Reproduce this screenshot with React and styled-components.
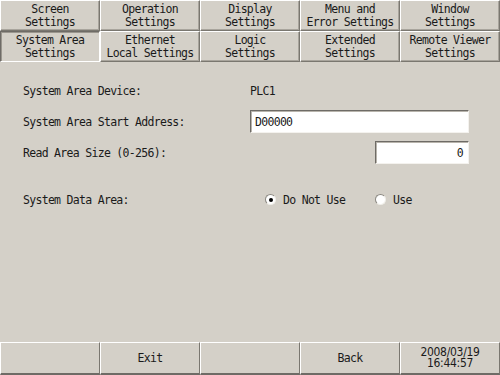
import React from "react";
import styled, { createGlobalStyle } from "styled-components";

const GlobalStyle = createGlobalStyle`
  html, body {
    margin: 0;
    padding: 0;
    background: #d4d0c8;
  }
  body {
    font-family: "DejaVu Sans Mono", "Liberation Mono", monospace;
    font-size: 11.5px;
    letter-spacing: -0.7px;
    color: #1a1a1a;
  }
`;

const Screen = styled.div`
  width: 500px;
  height: 375px;
  background: #d4d0c8;
  display: flex;
  flex-direction: column;
  overflow: hidden;
`;

const TabGrid = styled.div`
  display: grid;
  grid-template-columns: repeat(5, 100px);
  grid-auto-rows: 31px;
`;

const Tab = styled.div`
  box-sizing: border-box;
  display: flex;
  align-items: center;
  justify-content: center;
  text-align: center;
  line-height: 13px;
  white-space: pre;
  background: #d4d0c8;
  border-top: 1px solid ${(p) => (p.$active ? "#6e6b66" : "#ffffff")};
  border-left: 1px solid ${(p) => (p.$active ? "#6e6b66" : "#ffffff")};
  border-bottom: 1px solid ${(p) => (p.$active ? "#ffffff" : "#7a7770")};
  border-right: 1px solid ${(p) => (p.$active ? "#ffffff" : "#7a7770")};
  box-shadow: ${(p) =>
    p.$active ? "inset 1px 1px 0 #9a968e" : "inset -1px -1px 0 #a8a49c"};
`;

const Content = styled.div`
  flex: 1;
  padding: 13px 32px 0 23px;
  display: flex;
  flex-direction: column;
`;

const Row = styled.div`
  display: grid;
  grid-template-columns: 227px 1fr;
  align-items: center;
  height: 31px;
  margin-top: ${(p) => p.$gap || 0}px;
`;

const Label = styled.span``;

const Value = styled.span``;

const Input = styled.div`
  box-sizing: border-box;
  height: 23px;
  width: ${(p) => p.$width}px;
  margin-left: ${(p) => p.$offset || 0}px;
  background: #ffffff;
  border-top: 1px solid #6e6b66;
  border-left: 1px solid #6e6b66;
  border-bottom: 1px solid #f4f2ee;
  border-right: 1px solid #f4f2ee;
  box-shadow: inset 1px 1px 0 #b8b4ac;
  display: flex;
  align-items: center;
  justify-content: ${(p) => (p.$right ? "flex-end" : "flex-start")};
  padding: 0 5px 0 4px;
`;

const RadioGroup = styled.div`
  display: flex;
  align-items: center;
  padding-left: 15px;
`;

const RadioOption = styled.label`
  display: flex;
  align-items: center;
  gap: 7px;
  width: ${(p) => p.$width}px;
`;

const RadioCircle = styled.span`
  box-sizing: border-box;
  width: 11px;
  height: 11px;
  border-radius: 50%;
  background: #ffffff;
  border: 1px solid;
  border-color: #8a8780 #f0eee9 #f0eee9 #8a8780;
  display: flex;
  align-items: center;
  justify-content: center;

  &::after {
    content: "";
    width: 4px;
    height: 4px;
    border-radius: 50%;
    background: ${(p) => (p.$checked ? "#000000" : "transparent")};
  }
`;

const BottomBar = styled.div`
  display: grid;
  grid-template-columns: repeat(5, 100px);
  height: 33px;
`;

const BarButton = styled.div`
  box-sizing: border-box;
  display: flex;
  align-items: center;
  justify-content: center;
  text-align: center;
  line-height: 12px;
  white-space: pre;
  border-top: 1px solid #ffffff;
  border-left: 1px solid #ffffff;
  border-bottom: 2px solid #6e6b66;
  border-right: 1px solid #7a7770;
`;

const Clock = styled.span`
  font-family: "DejaVu Sans Condensed", "Liberation Mono", monospace;
  font-size: 12px;
  letter-spacing: -0.3px;
  line-height: 11px;
`;

export default function App() {
  const tabs = [
    "Screen\nSettings",
    "Operation\nSettings",
    "Display\nSettings",
    "Menu and\nError Settings",
    "Window\nSettings",
    "System Area\nSettings",
    "Ethernet\nLocal Settings",
    "Logic\nSettings",
    "Extended\nSettings",
    "Remote Viewer\nSettings",
  ];

  return (
    <>
      <GlobalStyle />
      <Screen>
        <TabGrid>
          {tabs.map((t, i) => (
            <Tab key={i} $active={i === 5}>
              {t}
            </Tab>
          ))}
        </TabGrid>
        <Content>
          <Row>
            <Label>System Area Device:</Label>
            <Value>PLC1</Value>
          </Row>
          <Row>
            <Label>System Area Start Address:</Label>
            <Input $width={219}>D00000</Input>
          </Row>
          <Row>
            <Label>Read Area Size (0-256):</Label>
            <Input $width={94} $offset={125} $right>
              0
            </Input>
          </Row>
          <Row $gap={16}>
            <Label>System Data Area:</Label>
            <RadioGroup>
              <RadioOption $width={110}>
                <RadioCircle $checked />
                Do Not Use
              </RadioOption>
              <RadioOption $width={60}>
                <RadioCircle />
                Use
              </RadioOption>
            </RadioGroup>
          </Row>
        </Content>
        <BottomBar>
          <BarButton />
          <BarButton>Exit</BarButton>
          <BarButton />
          <BarButton>Back</BarButton>
          <BarButton>
            <Clock>{"2008/03/19\n16:44:57"}</Clock>
          </BarButton>
        </BottomBar>
      </Screen>
    </>
  );
}
